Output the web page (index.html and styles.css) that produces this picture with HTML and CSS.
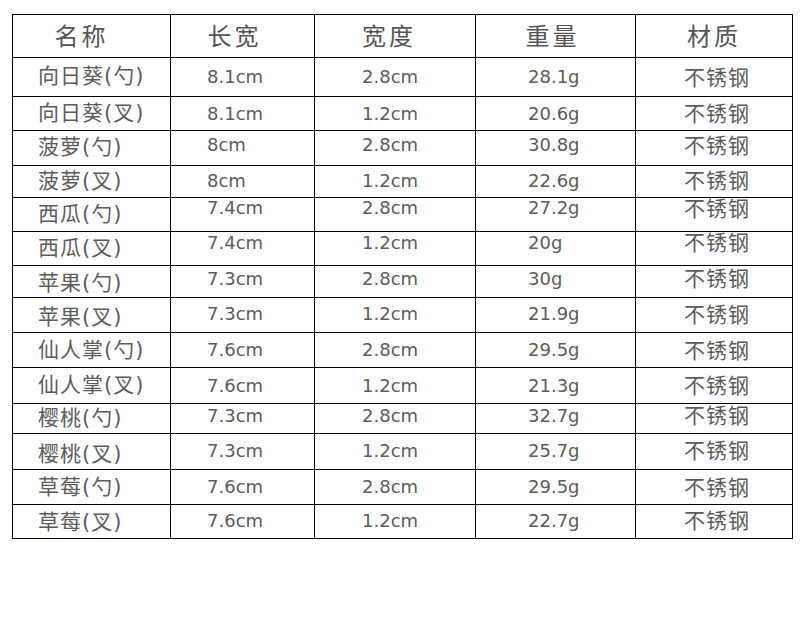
FILE: index.html
```html
<!DOCTYPE html>
<html lang="zh">
<head>
<meta charset="utf-8">
<title>尺寸表</title>
<link rel="stylesheet" href="styles.css">
</head>
<body>
<div class="sheet">
  <div class="row head h43">
    <div class="cell th">名称</div>
    <div class="cell th th2">长宽</div>
    <div class="cell th th3">宽度</div>
    <div class="cell th th4">重量</div>
    <div class="cell th th5">材质</div>
  </div>
  <div class="row h39">
    <div class="cell name">向日葵(勺)</div><div class="cell c2">8.1cm</div><div class="cell c3">2.8cm</div><div class="cell c4">28.1g</div><div class="cell c5">不锈钢</div>
  </div>
  <div class="row h34">
    <div class="cell name">向日葵(叉)</div><div class="cell c2">8.1cm</div><div class="cell c3">1.2cm</div><div class="cell c4">20.6g</div><div class="cell c5">不锈钢</div>
  </div>
  <div class="row h35 up3">
    <div class="cell name">菠萝(勺)</div><div class="cell c2">8cm</div><div class="cell c3">2.8cm</div><div class="cell c4">30.8g</div><div class="cell c5">不锈钢</div>
  </div>
  <div class="row h32 up1">
    <div class="cell name">菠萝(叉)</div><div class="cell c2">8cm</div><div class="cell c3">1.2cm</div><div class="cell c4">22.6g</div><div class="cell c5">不锈钢</div>
  </div>
  <div class="row h34 up7">
    <div class="cell name">西瓜(勺)</div><div class="cell c2">7.4cm</div><div class="cell c3">2.8cm</div><div class="cell c4">27.2g</div><div class="cell c5">不锈钢</div>
  </div>
  <div class="row h34 up6">
    <div class="cell name">西瓜(叉)</div><div class="cell c2">7.4cm</div><div class="cell c3">1.2cm</div><div class="cell c4">20g</div><div class="cell c5">不锈钢</div>
  </div>
  <div class="row h32 up3 down2">
    <div class="cell name">苹果(勺)</div><div class="cell c2">7.3cm</div><div class="cell c3">2.8cm</div><div class="cell c4">30g</div><div class="cell c5">不锈钢</div>
  </div>
  <div class="row h35 up1 down3">
    <div class="cell name">苹果(叉)</div><div class="cell c2">7.3cm</div><div class="cell c3">1.2cm</div><div class="cell c4">21.9g</div><div class="cell c5">不锈钢</div>
  </div>
  <div class="row h35 down1">
    <div class="cell name">仙人掌(勺)</div><div class="cell c2">7.6cm</div><div class="cell c3">2.8cm</div><div class="cell c4">29.5g</div><div class="cell c5">不锈钢</div>
  </div>
  <div class="row h36">
    <div class="cell name">仙人掌(叉)</div><div class="cell c2">7.6cm</div><div class="cell c3">1.2cm</div><div class="cell c4">21.3g</div><div class="cell c5">不锈钢</div>
  </div>
  <div class="row h30 up3">
    <div class="cell name">樱桃(勺)</div><div class="cell c2">7.3cm</div><div class="cell c3">2.8cm</div><div class="cell c4">32.7g</div><div class="cell c5">不锈钢</div>
  </div>
  <div class="row h36 up1 down3">
    <div class="cell name">樱桃(叉)</div><div class="cell c2">7.3cm</div><div class="cell c3">1.2cm</div><div class="cell c4">25.7g</div><div class="cell c5">不锈钢</div>
  </div>
  <div class="row h35 down1">
    <div class="cell name">草莓(勺)</div><div class="cell c2">7.6cm</div><div class="cell c3">2.8cm</div><div class="cell c4">29.5g</div><div class="cell c5">不锈钢</div>
  </div>
  <div class="row h34 up1 down1">
    <div class="cell name">草莓(叉)</div><div class="cell c2">7.6cm</div><div class="cell c3">1.2cm</div><div class="cell c4">22.7g</div><div class="cell c5">不锈钢</div>
  </div>
</div>
</body>
</html>
```

FILE: styles.css
```css
html, body {
  margin: 0;
  padding: 0;
  background: #ffffff;
}

body {
  padding: 14px 0 0 12px;
  font-family: "DejaVu Sans", "Noto Sans CJK SC", sans-serif;
  color: #5c5c5c;
}

.sheet {
  width: 781px;
  border-top: 1px solid #000;
  border-left: 1px solid #000;
  box-sizing: border-box;
}

.row {
  --up: 0px;
  --down: 0px;
  display: grid;
  grid-template-columns: 158px 144px 161px 160px 157px;
  grid-template-rows: 100%;
  border-bottom: 1px solid #000;
  box-sizing: border-box;
}

.h43 { height: 43px; }
.h39 { height: 39px; }
.h36 { height: 36px; }
.h35 { height: 35px; }
.h34 { height: 34px; }
.h32 { height: 32px; }
.h30 { height: 30px; }

.up1 { --up: 1px; }
.up3 { --up: 3px; }
.up6 { --up: 6px; }
.up7 { --up: 6.5px; }
.down1 { --down: 1px; }
.down2 { --down: 2px; }
.down3 { --down: 3px; }

.cell {
  border-right: 1px solid #000;
  display: flex;
  align-items: center;
  box-sizing: border-box;
  min-height: 0;
  font-size: 18px;
  line-height: 22px;
  white-space: nowrap;
}

.th {
  justify-content: center;
  font-family: "Noto Sans CJK SC", sans-serif;
  font-size: 24px;
  line-height: 28px;
  letter-spacing: 3px;
  padding-right: 20px;
  padding-bottom: 2px;
  color: #555555;
}
.th2 { padding-right: 16px; }
.th3 { padding-right: 12px; }
.th4 { padding-right: 6px; }
.th5 { padding-right: 0; }

.name {
  font-size: 21px;
  letter-spacing: 1px;
  padding-left: 25px;
  padding-top: calc(var(--down) * 2);
  padding-bottom: 2px;
}

.c2, .c3, .c4 {
  padding-bottom: calc(var(--up) * 2);
}

.c2 { padding-left: 36px; }
.c3 { padding-left: 47px; }
.c4 { padding-left: 52px; }
.c5 {
  padding-left: 48px;
  padding-bottom: calc(var(--up) * 2 + 3px);
  font-family: "Noto Sans CJK SC", sans-serif;
  font-size: 21px;
  letter-spacing: 1px;
}
```
